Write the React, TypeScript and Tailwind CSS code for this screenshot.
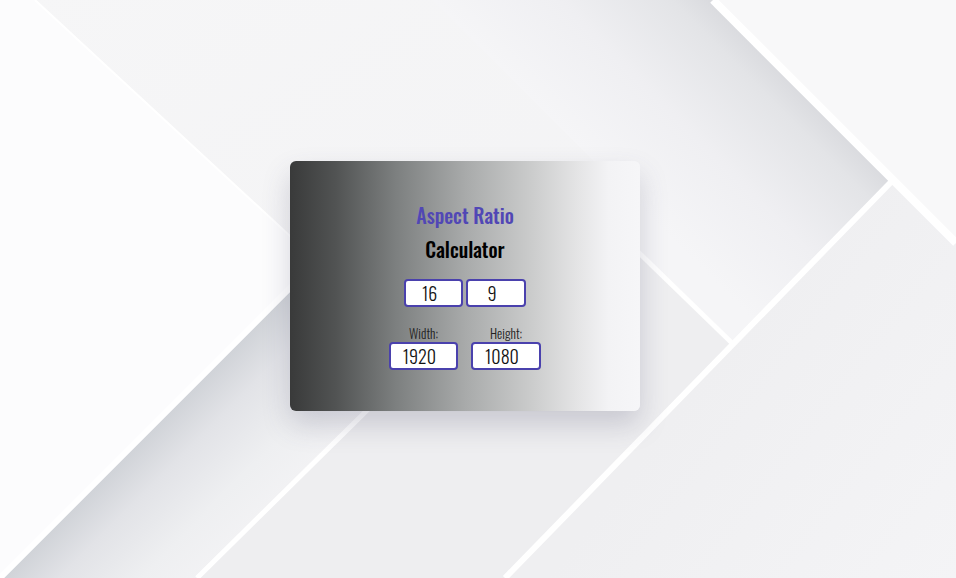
import React from 'react';

// geometric backdrop: light panels split by white diagonal strips
const Backdrop = () => (
  <svg className="absolute inset-0 h-full w-full" viewBox="0 0 956 578" preserveAspectRatio="none">
    <defs>
      <linearGradient id="midTop" x1="0" y1="0" x2="1" y2="1">
        <stop offset="0" stopColor="#f6f6f7" />
        <stop offset="1" stopColor="#f1f1f3" />
      </linearGradient>
      <linearGradient id="bandLeft" gradientUnits="userSpaceOnUse" x1="150" y1="428" x2="250" y2="528">
        <stop offset="0" stopColor="#cfd2d7" />
        <stop offset="0.3" stopColor="#e2e3e7" />
        <stop offset="0.7" stopColor="#eeeff1" />
        <stop offset="1" stopColor="#f2f2f4" />
      </linearGradient>
      <linearGradient id="bandRight" gradientUnits="userSpaceOnUse" x1="803" y1="90" x2="663" y2="230">
        <stop offset="0" stopColor="#d9dade" />
        <stop offset="0.15" stopColor="#e3e4e7" />
        <stop offset="0.55" stopColor="#efeff2" />
        <stop offset="1" stopColor="#f5f5f7" />
      </linearGradient>
      <linearGradient id="lowRight" gradientUnits="userSpaceOnUse" x1="700" y1="380" x2="956" y2="578">
        <stop offset="0" stopColor="#efeff1" />
        <stop offset="1" stopColor="#f4f4f6" />
      </linearGradient>
    </defs>
    <rect width="956" height="578" fill="url(#midTop)" />
    <polygon points="0,0 35,0 317,261 0,578" fill="#fcfcfd" />
    <polygon points="0,578 400,178 600,178 200,578" fill="url(#bandLeft)" />
    <polygon points="713,0 956,0 956,243" fill="#f8f8f9" />
    <polygon points="433,0 713,0 893,180 733,344 640,255 620,187" fill="url(#bandRight)" />
    <polygon points="600,215 640,255 733,344 505,578 200,578 400,378" fill="#eeeef0" />
    <polygon points="893,180 956,243 956,578 505,578" fill="url(#lowRight)" />
    <line x1="35" y1="0" x2="317" y2="261" stroke="#ffffff" strokeWidth="2" />
    <line x1="0" y1="578" x2="320" y2="258" stroke="#ffffff" strokeWidth="6" />
    <line x1="197" y1="578" x2="420" y2="358" stroke="#ffffff" strokeWidth="5" />
    <line x1="713" y1="0" x2="956" y2="243" stroke="#ffffff" strokeWidth="8" />
    <line x1="893" y1="180" x2="505" y2="578" stroke="#ffffff" strokeWidth="6" />
    <line x1="600" y1="215" x2="733" y2="344" stroke="#ffffff" strokeWidth="5" />
  </svg>
);

const Box = ({ value, w }: { value: string; w: string }) => (
  <input
    type="text"
    defaultValue={value}
    className={`${w} h-[28px] rounded-[4px] border-2 border-[#4a41ad] bg-white pr-[8px] text-center text-[18px] font-light leading-none text-[#111] outline-none`}
  />
);

export default function App() {
  return (
    <div className="relative flex min-h-[578px] w-full items-center justify-center overflow-hidden bg-[#f3f3f5] pr-[26px] pb-[6px] font-['Oswald','Liberation_Sans',sans-serif]">
      <Backdrop />
      <div className="relative flex h-[250px] w-[350px] flex-col items-center rounded-[6px] bg-[linear-gradient(to_right,#393a3a_0%,#515353_13%,#7c7f7f_30%,#a8aaaa_50%,#c9caca_68%,#e4e4e5_82%,#f3f3f5_91%,#f6f6f8_100%)] pt-[37px] shadow-[0_14px_28px_rgba(70,70,100,0.22)]">
        <h1 className="text-[20px] font-medium leading-[34px] text-[#5147b5]">Aspect Ratio</h1>
        <h2 className="text-[20px] font-medium leading-[34px] text-black">Calculator</h2>

        <div className="mt-[13px] flex gap-[3px]">
          <Box value="16" w="w-[59px]" />
          <Box value="9" w="w-[60px]" />
        </div>

        <div className="mt-[18px] flex gap-[13px]">
          <label className="flex flex-col items-center">
            <span className="mb-[1px] text-[13px] font-light leading-[16px] text-[#222]">Width:</span>
            <Box value="1920" w="w-[69px]" />
          </label>
          <label className="flex flex-col items-center">
            <span className="mb-[1px] text-[13px] font-light leading-[16px] text-[#222]">Height:</span>
            <Box value="1080" w="w-[70px]" />
          </label>
        </div>
      </div>
    </div>
  );
}
